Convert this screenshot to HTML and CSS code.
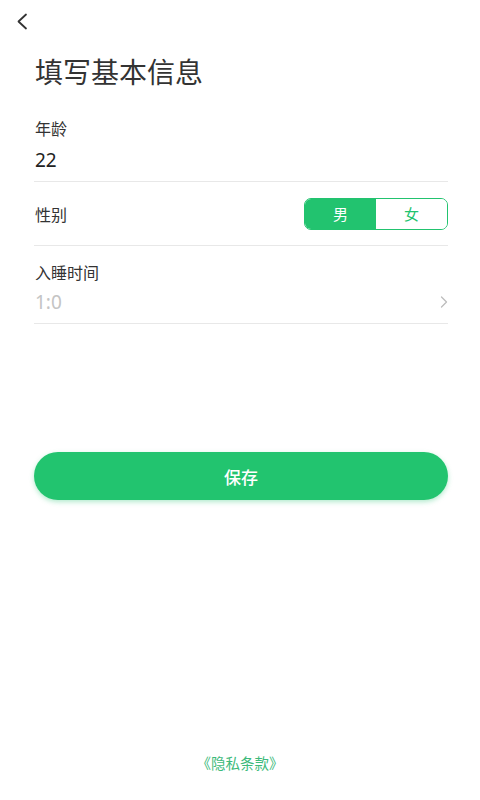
FILE: index.html
```html
<!DOCTYPE html>
<html lang="zh-CN">
<head>
<meta charset="utf-8">
<title>填写基本信息</title>
<link rel="stylesheet" href="styles.css">
</head>
<body>
<div class="page">
  <header class="nav">
    <svg class="back" width="12" height="17" viewBox="0 0 12 17"><path d="M10 1.5 L2.5 8.5 L10 15.5" fill="none" stroke="#333" stroke-width="1.8" stroke-linecap="round" stroke-linejoin="round"/></svg>
  </header>
  <main class="content">
    <h1 class="title">填写基本信息</h1>
    <div class="field stack">
      <div class="label">年龄</div>
      <div class="value">22</div>
    </div>
    <div class="field row">
      <div class="label">性别</div>
      <div class="toggle">
        <span class="opt on">男</span>
        <span class="opt">女</span>
      </div>
    </div>
    <div class="field stack">
      <div class="label">入睡时间</div>
      <div class="value-row">
        <span class="value placeholder">1:0</span>
        <svg class="arrow" width="8" height="12" viewBox="0 0 8 12"><path d="M1.5 1 L6.5 6 L1.5 11" fill="none" stroke="#bdbdbd" stroke-width="1.3" stroke-linecap="round" stroke-linejoin="round"/></svg>
      </div>
    </div>
    <button class="save">保存</button>
  </main>
  <footer class="foot">《隐私条款》</footer>
</div>
</body>
</html>
```
FILE: styles.css
```css
* { box-sizing: border-box; }
html, body { margin: 0; padding: 0; background: #fff; }
body {
  font-family: "Noto Sans CJK SC", "Noto Sans", sans-serif;
  color: #333;
}
.page {
  min-height: 800px;
  display: flex;
  flex-direction: column;
}
.nav {
  height: 43px;
  display: flex;
  align-items: center;
  padding-left: 16px;
}
.back { display: block; }
.content {
  padding: 0 32px 0 34px;
}
.title {
  margin: 0;
  padding-top: 14px;
  font-size: 28px;
  line-height: 28px;
  font-weight: 400;
  color: #333;
  padding-left: 1px;
}
.field {
  border-bottom: 1px solid #e8e8e8;
}
.field.stack {
  display: flex;
  flex-direction: column;
  padding: 0 0 9px 1px;
}
.content .title + .field { padding-top: 33px; }
.field.row + .field { padding-top: 16px; }
.label {
  font-size: 16px;
  line-height: 20px;
  color: #333;
}
.value {
  margin-top: 10px;
  font-size: 19px;
  line-height: 24px;
  color: #222;
  font-family: "Noto Sans", sans-serif;
}
.value-row {
  margin-top: 8px;
  display: flex;
  align-items: center;
  justify-content: space-between;
}
.value-row .value { margin-top: 0; }
.placeholder { color: #c4c4c4; }
.arrow { margin-right: 0; }
.field.row {
  height: 64px;
  display: flex;
  align-items: center;
  justify-content: space-between;
  padding-left: 1px;
}
.toggle {
  display: flex;
  width: 144px;
  height: 32px;
  border: 1px solid #22c36f;
  border-radius: 7px;
  overflow: hidden;
}
.opt {
  flex: 1;
  display: flex;
  align-items: center;
  justify-content: center;
  font-size: 15px;
  color: #22c36f;
  background: #fff;
}
.opt.on {
  background: #22c36f;
  color: #fff;
}
.save {
  display: block;
  width: 100%;
  margin-top: 128px;
  height: 48px;
  border: none;
  border-radius: 24px;
  background: #22c46f;
  color: #fff;
  font-family: "Noto Sans CJK SC", sans-serif;
  font-size: 17px;
  font-weight: 500;
  box-shadow: 0 2px 5px rgba(34, 196, 111, 0.35);
}
.foot {
  margin-top: auto;
  padding-bottom: 27px;
  text-align: center;
  font-size: 14.5px;
  line-height: 20px;
  color: #3dba7b;
}
```
